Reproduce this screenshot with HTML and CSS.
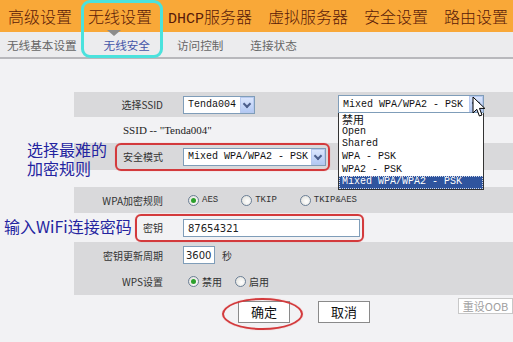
FILE: index.html
```html
<!DOCTYPE html>
<html lang="zh-CN">
  <head>
    <meta charset="UTF-8" />
    <title>无线安全</title>
    <link rel="stylesheet" href="styles.css">
  </head>
  <body>
    <div class="page">
      <div class="nav">
        <span>高级设置</span>
        <span>无线设置</span>
        <span><span class="latin">DHCP</span>服务器</span>
        <span>虚拟服务器</span>
        <span>安全设置</span>
        <span>路由设置</span>
      </div>
      <div class="subnav">
        <span>无线基本设置</span>
        <span class="active">无线安全</span>
        <span>访问控制</span>
        <span>连接状态</span>
      </div>

      <div class="form">
        <div class="row shade h25">
          <div class="label">选择SSID</div>
          <div class="val">
            <div class="select w72"><span class="txt">Tenda004</span><span class="arrow"></span></div>
          </div>
        </div>
        <div class="row h26">
          <div class="note-ssid">SSID -- "Tenda004"</div>
        </div>
        <div class="row shade h27">
          <div class="label">安全模式</div>
          <div class="val">
            <div class="select w143"><span class="txt">Mixed WPA/WPA2 - PSK</span><span class="arrow"></span></div>
          </div>
        </div>
        <div class="row h17"></div>
        <div class="row shade h26">
          <div class="label">WPA加密规则</div>
          <div class="val opts wide">
            <span class="opt"><i class="radio on"></i>AES</span>
            <span class="opt"><i class="radio"></i>TKIP</span>
            <span class="opt"><i class="radio"></i>TKIP&amp;AES</span>
          </div>
        </div>
        <div class="row h29">
          <div class="label">密钥</div>
          <div class="val"><div class="input w177">87654321</div></div>
        </div>
        <div class="row shade h26">
          <div class="label">密钥更新周期</div>
          <div class="val"><div class="input w32">3600</div><span class="unit">秒</span></div>
        </div>
        <div class="row shade h27">
          <div class="label">WPS设置</div>
          <div class="val opts">
            <span class="opt"><i class="radio on"></i>禁用</span>
            <span class="opt"><i class="radio"></i>启用</span>
          </div>
        </div>
      </div>

      <div class="actions">
        <div class="btn">确定</div>
        <div class="btn">取消</div>
        <div class="btn reset">重设OOB</div>
      </div>

      <!-- annotations drawn over the screenshot -->
      <div class="mark cyan"></div>
      <div class="mark red mode"></div>
      <div class="mark red key"></div>
      <div class="mark red ellipse"></div>
      <div class="tip tip1"><div>选择最难的</div><div>加密规则</div></div>
      <div class="tip tip2">输入WiFi连接密码</div>

      <div class="dropdown">
        <div class="select w146"><span class="txt">Mixed WPA/WPA2 - PSK</span><span class="arrow"></span></div>
        <ul class="list">
          <li class="cjk">禁用</li>
          <li>Open</li>
          <li>Shared</li>
          <li>WPA - PSK</li>
          <li>WPA2 - PSK</li>
          <li class="sel">Mixed WPA/WPA2 - PSK</li>
        </ul>
      </div>
      <svg class="cursor" width="14" height="22" viewBox="0 0 14 22">
        <path d="M1 1 L1 17 L4.8 13.3 L7.4 20 L10 19 L7.5 12.4 L12.8 12.4 Z" fill="#fff" stroke="#000" stroke-width="1" stroke-linejoin="round"/>
      </svg>
    </div>
  </body>
</html>
```

FILE: styles.css
```css
body {
  margin: 0;
  background: #f2f2f4;
  font-family: "Noto Sans CJK SC", "DejaVu Sans", sans-serif;
}

.page {
  position: relative;
  width: 513px;
  height: 342px;
  overflow: hidden;
  background: #f2f2f4;
}

/* top menu */
.nav {
  height: 32px;
  background: #f9a838;
  display: flex;
  align-items: center;
  gap: 16px;
  padding-left: 8px;
  font-size: 16px;
  font-weight: 300;
  color: #5a1a08;
  white-space: nowrap;
}

.nav .latin {
  font-family: "Liberation Mono", monospace;
  font-size: 15px;
}

.subnav {
  height: 25px;
  background: #ececee;
  border-bottom: 2px solid #b8b8bc;
  display: flex;
  align-items: center;
  gap: 27px;
  padding-left: 7px;
  font-size: 11.6px;
  color: #666;
  white-space: nowrap;
}

.subnav .active {
  position: relative;
  color: #4455a8;
}

.subnav .active::before {
  content: "";
  position: absolute;
  top: -7px;
  left: 3px;
  border-left: 7px solid transparent;
  border-right: 7px solid transparent;
  border-top: 6px solid #8c8c8c;
}

/* form table */
.form {
  margin: 33px 0 0 74px;
  font-size: 10px;
  color: #333;
}

.row {
  display: flex;
  align-items: center;
}

.shade {
  background: #d9d9db;
}

.h17 { height: 17px; }
.h25 { height: 25px; }
.h26 { height: 26px; }
.h27 { height: 27px; }
.h29 { height: 29px; }

.label {
  width: 89px;
  text-align: right;
  white-space: nowrap;
}

.val {
  margin-left: 20px;
  display: flex;
  align-items: center;
}

.note-ssid {
  padding-left: 49px;
  font-family: "Liberation Serif", serif;
  font-size: 11px;
  color: #222;
}

.select {
  height: 18px;
  box-sizing: border-box;
  border: 1px solid #7f9db9;
  background: #fff;
  display: flex;
  align-items: center;
  justify-content: space-between;
  font-family: "Liberation Mono", monospace;
  font-size: 10px;
  color: #111;
}

.select .txt {
  padding-left: 4px;
  white-space: nowrap;
}

.select .arrow {
  position: relative;
  width: 14px;
  height: 16px;
  box-sizing: border-box;
  border: 1px solid #b7c9ef;
  background: linear-gradient(#dbe6fd, #b3c9f4);
}

.select .arrow::after {
  content: "";
  position: absolute;
  left: 3px;
  top: 3px;
  width: 4px;
  height: 4px;
  border-right: 2px solid #4c5f8c;
  border-bottom: 2px solid #4c5f8c;
  transform: rotate(45deg);
}

.w72 { width: 72px; }
.w143 { width: 143px; }
.w146 { width: 146px; }

.input {
  height: 18px;
  box-sizing: border-box;
  border: 1px solid #7f9db9;
  background: #fff;
  padding: 1px 4px 0;
  font-family: "DejaVu Sans", sans-serif;
  font-size: 10px;
  line-height: 15px;
  color: #222;
}

.w177 { width: 177px; }
.w32 { width: 32px; padding: 1px 2px 0; }

.unit {
  margin-left: 7px;
}

.opts .opt {
  display: inline-flex;
  align-items: center;
  gap: 3px;
  margin-left: 5px;
  margin-right: 8px;
}

.opts.wide .opt {
  margin-right: 18px;
  font-family: "Liberation Mono", monospace;
  font-size: 9px;
}

.radio {
  position: relative;
  width: 11px;
  height: 11px;
  box-sizing: border-box;
  border: 1px solid #6b7f96;
  border-radius: 50%;
  background: radial-gradient(circle at 60% 60%, #fff, #dcdcd6);
}

.radio.on::after {
  content: "";
  position: absolute;
  left: 2px;
  top: 2px;
  width: 5px;
  height: 5px;
  border-radius: 50%;
  background: #2ca02c;
}

/* buttons */
.actions {
  display: flex;
  align-items: flex-start;
  gap: 28px;
  padding: 6px 0 0 238px;
}

.btn {
  width: 52px;
  height: 22px;
  box-sizing: border-box;
  border: 1px solid #8a8a8a;
  background: #fff;
  text-align: center;
  font-size: 13px;
  line-height: 20px;
  color: #111;
}

.btn.reset {
  margin: -3px 0 0 auto;
  width: 55px;
  height: 16px;
  border-color: #c8c8c8;
  font-size: 11px;
  line-height: 14px;
  color: #a0a0a0;
}

/* overlays on the screenshot */
.mark {
  position: absolute;
  box-sizing: border-box;
}

.cyan {
  left: 81px;
  top: 0;
  width: 82px;
  height: 58px;
  border: 3px solid #4be2dd;
  border-radius: 9px;
}

.red {
  border: 2px solid #d33a3c;
  border-radius: 6px;
  box-shadow: 0 0 1px #e88;
}

.mode {
  left: 115px;
  top: 143px;
  width: 215px;
  height: 28px;
}

.key {
  left: 135px;
  top: 214px;
  width: 229px;
  height: 28px;
}

.ellipse {
  left: 222px;
  top: 298px;
  width: 81px;
  height: 32px;
  border-radius: 50%;
}

.tip {
  position: absolute;
  font-size: 16px;
  line-height: 19px;
  color: #2424a0;
  white-space: nowrap;
}

.tip1 {
  left: 27px;
  top: 140px;
}

.tip2 {
  left: 4px;
  top: 217px;
}

.dropdown {
  position: absolute;
  left: 338px;
  top: 95px;
}

.list {
  margin: 0;
  padding: 0;
  list-style: none;
  width: 146px;
  box-sizing: border-box;
  border: 1px solid #333;
  border-top: 0;
  background: #fff;
  font-family: "Liberation Mono", monospace;
  font-size: 10px;
  color: #111;
}

.list li {
  height: 12.7px;
  line-height: 12.7px;
  padding-left: 3px;
  white-space: nowrap;
}

.list li.cjk {
  font-family: "Noto Sans CJK SC", sans-serif;
  font-size: 11px;
}

.list li.sel {
  background: #2f549e;
  color: #fff;
  outline: 1px dotted #d0d8e8;
  outline-offset: -1px;
}

.cursor {
  position: absolute;
  left: 472px;
  top: 96px;
}
```
